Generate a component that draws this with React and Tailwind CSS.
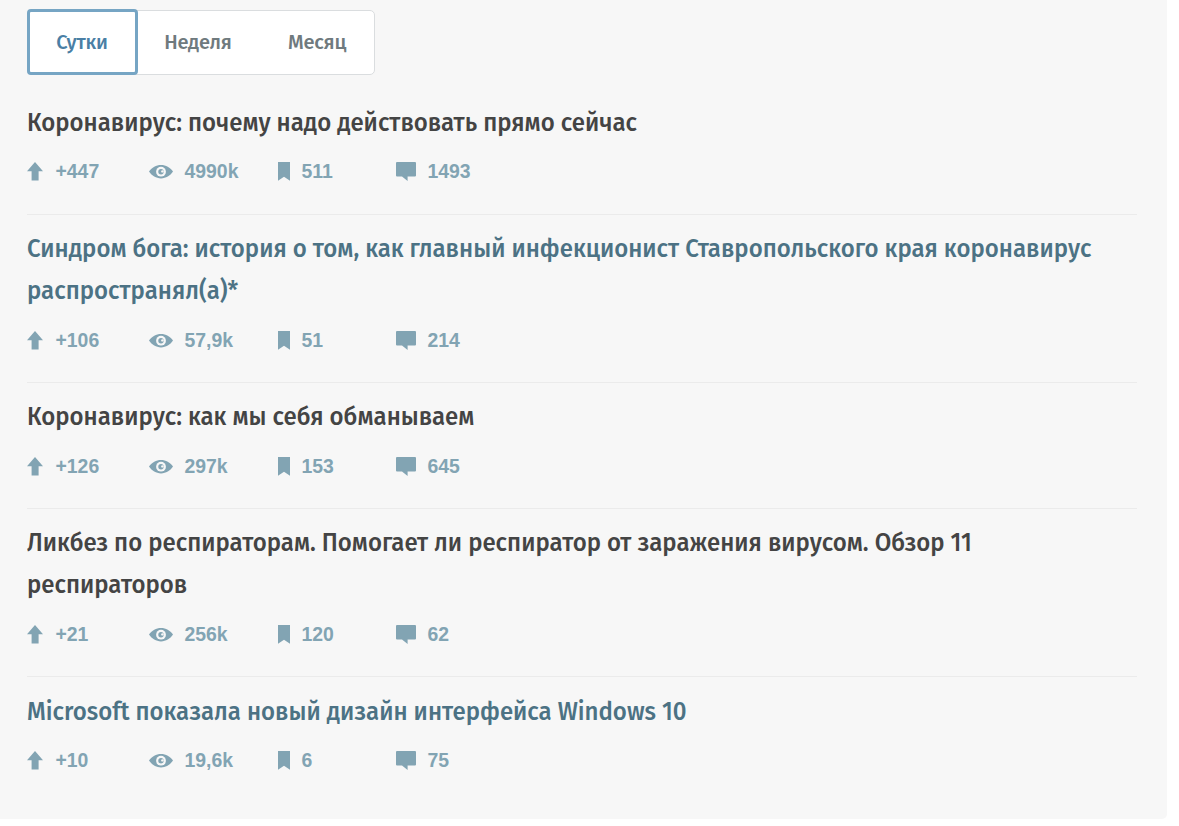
/**
 * App.jsx - list of the most read posts
 */
const TABS = [
  { label: 'Сутки', active: true, className: 'w-[111px] h-[66px] border-[3px] border-[#76a5c4] text-[#4a7fa5] pr-px' },
  { label: 'Неделя', className: 'w-[119px] h-16 text-[#6f7a7e] pl-px' },
  { label: 'Месяц', className: 'w-[119px] h-16 text-[#6f7a7e] pl-px' },
]

const POSTS = [
  { lines: ['Коронавирус: почему надо действовать прямо сейчас'], votes: '+447', views: '4990k', saved: '511', comments: '1493' },
  {
    lines: ['Синдром бога: история о том, как главный инфекционист Ставропольского края коронавирус', 'распространял(а)*'],
    visited: true, votes: '+106', views: '57,9k', saved: '51', comments: '214',
  },
  { lines: ['Коронавирус: как мы себя обманываем'], votes: '+126', views: '297k', saved: '153', comments: '645' },
  {
    lines: ['Ликбез по респираторам. Помогает ли респиратор от заражения вирусом. Обзор 11', 'респираторов'],
    votes: '+21', views: '256k', saved: '120', comments: '62',
  },
  { lines: ['Microsoft показала новый дизайн интерфейса Windows 10'], visited: true, votes: '+10', views: '19,6k', saved: '6', comments: '75' },
]

function ArrowIcon() {
  return (
    <svg width="16" height="20" viewBox="0 0 16 20" fill="currentColor">
      <path d="M8 1 16 10.2H11.6V19.5H4.6V10.2H0Z" />
    </svg>
  )
}

function EyeIcon() {
  return (
    <svg width="24" height="20" viewBox="0 0 24 20">
      <path d="M0 10.6C3 6.4 7 4 12 4S21 6.4 24 10.6C21 15 17 17.4 12 17.4S3 15 0 10.6Z" fill="currentColor" />
      <circle cx="12" cy="10.7" r="4.9" fill="#f7f7f7" />
      <circle cx="12" cy="10.7" r="2.7" fill="currentColor" />
      <circle cx="13.4" cy="10.4" r="1.2" fill="#f7f7f7" />
    </svg>
  )
}

function BookmarkIcon() {
  return (
    <svg width="12" height="20" viewBox="0 0 12 20" fill="currentColor">
      <path d="M0 1H12V19.8L6 15.8 0 19.8Z" />
    </svg>
  )
}

function CommentIcon() {
  return (
    <svg width="20" height="20" viewBox="0 0 20 20" fill="currentColor">
      <path d="M1 1H19Q20 1 20 2V14.6Q20 15.6 19 15.6H11.6V20L6 15.6H1Q0 15.6 0 14.6V2Q0 1 1 1Z" />
    </svg>
  )
}

function Stat({ icon, value, className }) {
  return (
    <div className={`flex items-center ${className}`}>
      {icon}
      <span>{value}</span>
    </div>
  )
}

function Post({ post }) {
  return (
    <li className="h-[126.1px] pt-[13.2px] border-b border-[#ebebeb] last:border-b-0 has-[span+span]:h-[168.1px]">
      <h2
        className={`text-[24px] leading-[42px] font-medium whitespace-nowrap ${post.visited ? 'text-[#4c7284]' : 'text-[#444444]'}`}
      >
        {post.lines.map((line) => (
          <span key={line} className="block origin-[0_70%] scale-y-105">{line}</span>
        ))}
      </h2>
      <div className="mt-[17.26px] flex h-5 font-['Liberation_Sans',Arial,sans-serif] text-[19.4px] leading-5 font-bold text-[#82a4b3]">
        <Stat className="w-[122px] gap-[12.5px]" icon={<ArrowIcon />} value={post.votes} />
        <Stat className="w-[128.5px] gap-[11.5px]" icon={<EyeIcon />} value={post.views} />
        <Stat className="w-[118px] gap-3" icon={<BookmarkIcon />} value={post.saved} />
        <Stat className="gap-3" icon={<CommentIcon />} value={post.comments} />
      </div>
    </li>
  )
}

export default function App() {
  return (
    <div className="h-[826px] bg-white font-['Fira_Sans','Noto_Sans',sans-serif]">
      <main className="w-[1167px] h-[819px] rounded-br-[5px] bg-[#f7f7f7] pl-[27px] pr-[30px] pt-[9px]">
        <div className="flex h-[66px] w-[348px] items-center">
          <div className="flex h-[65px] w-[348px] items-center rounded-[5px] border border-[#dadddf] bg-white">
            {TABS.map((tab) => (
              <button
                key={tab.label}
                className={`shrink-0 rounded-[4px] text-[20px] tracking-[-0.2px] font-medium ${tab.active ? '-ml-px' : ''} ${tab.className}`}
              >
                {tab.label}
              </button>
            ))}
          </div>
        </div>
        <ul className="mt-[14px]">
          {POSTS.map((post) => (
            <Post key={post.votes} post={post} />
          ))}
        </ul>
      </main>
    </div>
  )
}
